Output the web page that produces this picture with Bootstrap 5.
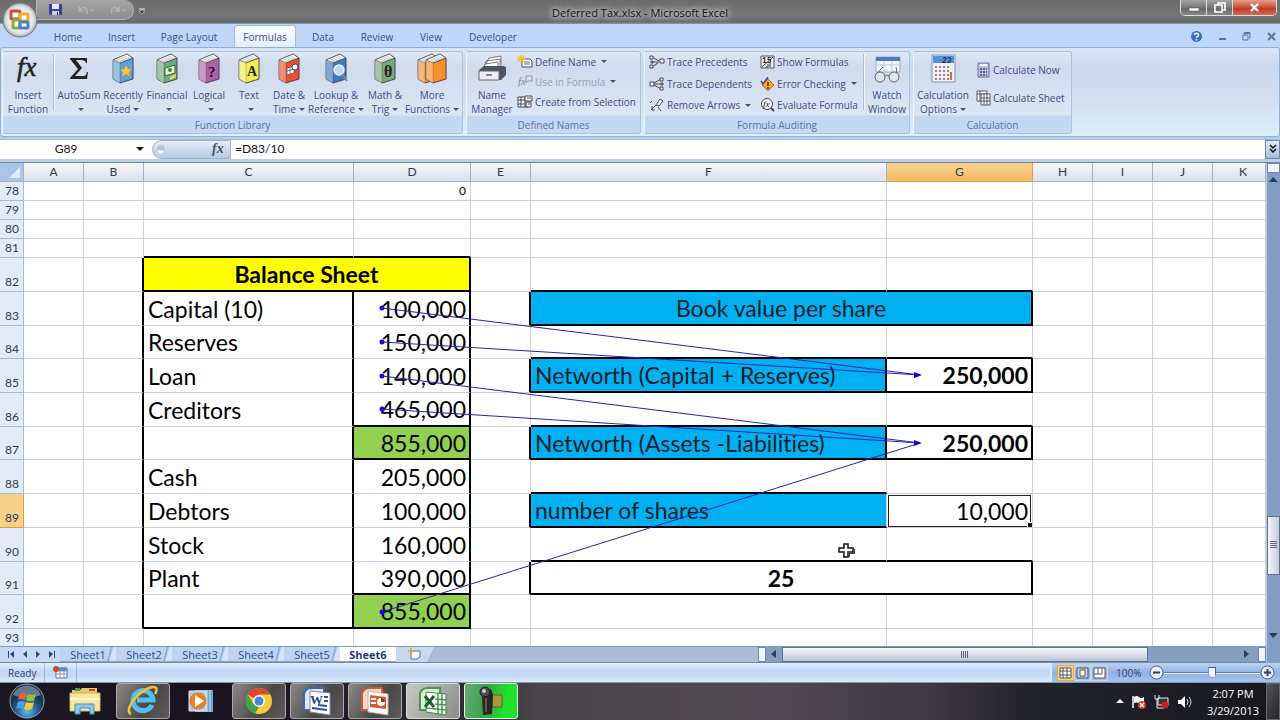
<!DOCTYPE html>
<html lang="en">
<head>
<meta charset="utf-8">
<meta name="viewport" content="width=device-width, initial-scale=1">
<title>Deferred Tax.xlsx - Microsoft Excel</title>
<link rel="stylesheet" href="https://cdn.jsdelivr.net/npm/bootstrap@5.3.0/dist/css/bootstrap.min.css">
<style>
  :root { --ui: "Open Sans", "Noto Sans", sans-serif; --cell: Lato, "Open Sans", sans-serif; --ink: #3b4f86; }
  body { font: 10px/14px var(--ui); color: var(--ink); background: #b9cde9; font-variant-ligatures: none; }
  button, input { font: inherit; color: inherit; border: 0; background: none; padding: 0; }
  a { color: inherit; text-decoration: none; }
  svg { flex: none; display: block; }

  .titlebar { height: 24px; background: linear-gradient(#6b6b6b, #757575 70%, #666 92%, #8fa3b5); color: #111; }
  .title-side { flex: 1 1 0; }
  .quick { height: 20px; width: 98px; margin-left: 36px; background: linear-gradient(#a5a5a5, #8d8d8d); border: 1px solid #b4b4b4; border-top: 0; border-radius: 0 12px 12px 0; }
  .title-text { font-size: 11px; line-height: 18px; text-shadow: 0 0 4px #ccc, 0 0 6px #ccc, 0 0 8px #bbb, 0 0 10px #bbb; }
  .win { height: 16px; border: 1px solid #ddd; border-top: 0; border-radius: 0 0 5px 5px; overflow: hidden; margin-right: 8px; }
  .win button { width: 26px; background: linear-gradient(#a3a3a3, #777 50%, #666 52%, #888); border-right: 1px solid #ddd; }
  .win .shut { width: 43px; border: 0; background: linear-gradient(#e2a090, #cc4a34 50%, #b93823 52%, #d5694e); }
  .win { margin-right: 3px; }
  .orb { position: absolute; left: 2px; top: 2px; z-index: 3; }

  .tabs { height: 23px; background: #bfd7fb; padding-left: 37px; }
  .rtab { height: 22px; line-height: 24px; text-align: center; }
  .rtab.on { background: linear-gradient(#fafcff, #e6eef9); border: 1px solid #9fb8dc; border-bottom: 0; border-radius: 3px 3px 0 0; line-height: 22px; }
  .w-60 { width: 62px; } .w-46 { width: 45px; } .w-90 { width: 90px; } .w-56 { width: 54px; } .w-dev { width: 70px; }

  .ribbon { height: 90px; padding: 3px 0 2px 1px; gap: 3px; background: linear-gradient(#dbe6f5, #cbd8eb 20%, #d3dfee 60%, #dceefc); border: 1px solid #8fb0d5; border-radius: 3px; }
  .rgroup { border: 1px solid #a9c2de; border-left-color: #edf4fb; border-radius: 3px; background: linear-gradient(#dee7f4, #cfdaec 20%, #dbe6f4 78%, #c1d6f0 79%, #c4d9f2); }
  .rgroup .cap { height: 17px; line-height: 19px; text-align: center; color: #5873ab; }
  .big { display: flex; flex-direction: column; align-items: center; white-space: nowrap; width: 44px; }
  .big svg { margin: 1px 0 4px; }
  .big.n40 { width: 40px; } .big.n50 { width: 50px; }
  .sp { margin-left: 2px; }
  .small-btn { display: flex; align-items: center; gap: 2px; white-space: nowrap; }
  .stack { display: flex; flex-direction: column; justify-content: space-around; }
  .vr-line { width: 1px; background: #a9bdd9; border-right: 1px solid #f3f7fc; box-sizing: content-box; margin: 2px 0 6px; }
  .dn::after { content: ""; display: inline-block; border: 3px solid transparent; border-top-color: #44546f; border-bottom: 0; margin-left: 3px; vertical-align: 2px; }
  .g-lib { width: 461px; } .g-names { width: 175px; } .g-audit { width: 266px; } .g-calc { width: 159px; }
  .off { color: #97a3b8; }

  .fbar { height: 23px; margin-top: 2px; background: #fff; border-top: 1px solid #a4bcd0; border-bottom: 3px solid #bcd0e6; color: #111; font: 12px/18px var(--cell); }
  .fbar input { min-width: 0; outline: 0; }
  .name-box { width: 132px; text-align: center; }
  .fx { width: 79px; border-radius: 10px 0 0 10px; background: linear-gradient(#e7eef8, #b6c8e2); border: 1px solid #9db3d0; }
  .expand { width: 15px; background: linear-gradient(#dfe8f4, #a9bbd8); border: 1px solid #6f86a8; }

  .work { min-height: 0; border-top: 1px solid #75869e; }
  .pane { min-height: 0; background: #fff; }
  .grid-tb { table-layout: fixed; border-collapse: separate; border-spacing: 0; width: 100%; font-family: var(--cell); font-size: 23px; line-height: 28px; color: #000; }
  .grid-tb td, .grid-tb th { border: 0 solid #ccd0da; border-width: 0 1px 1px 0; padding: 1px 4px 0; overflow: hidden; white-space: nowrap; vertical-align: middle; font-weight: 400; }
  .grid-tb thead th { font-size: 12px; line-height: 14px; height: 19px; text-align: center; color: #2e3b52; background: linear-gradient(#f4f6fa, #dde1ea); border-color: #9fb3d0; }
  .grid-tb thead th.hot { background: linear-gradient(#f8d493, #f1bb5f); border-color: #e09d3c; }
  .grid-tb tbody th { font-size: 12px; line-height: 14px; text-align: right; vertical-align: bottom; color: #2e3b52; background: #e4ebf6; border-color: #a5bad6; padding: 0 4px 2px 0; }
  .grid-tb tbody th.hot { background: #f9d088; border-color: #e09d3c; }
  .grid-tb .s td, .grid-tb .s th { height: 19px; font-size: 12px; line-height: 14px; padding-top: 0; }
  .grid-tb .t td, .grid-tb .t th { height: 34px; }
  .grid-tb .u td, .grid-tb .u th { height: 33px; }
  .grid-tb .br { border-right: 2px solid #000; }
  .grid-tb .bb { border-bottom: 2px solid #000; }
  .grid-tb .num { text-align: right; }
  .grid-tb .num.br { padding-right: 3px; }
  .grid-tb .total { background: #92d050; }
  .grid-tb .sky { background: #00b0f0; color: #10202c; }
  .grid-tb .yel { background: #ff0; }
  .c-h { width: 24px; } .c-n { width: 60px; } .c-c { width: 210px; } .c-d { width: 117px; } .c-f { width: 356px; } .c-g { width: 146px; }
  .pick { position: absolute; inset: 1px 1px 0 1px; border: 1px solid #222; }
  .handle { position: absolute; right: -1px; bottom: -1px; width: 4px; height: 4px; background: #111; border: 1px solid #fff; box-sizing: content-box; }
  .trace { position: absolute; left: 0; top: 0; pointer-events: none; }

  .sheets { height: 17px; background: #a9bbd8; border-top: 1px solid #7d99c2; border-bottom: 1px solid #7089ae; font-size: 11px; line-height: 15px; color: #2f4f88; }
  .sheets a { width: 56px; text-align: center; background: linear-gradient(105deg, #bdd3f2 85%, #7f9fca 86%, #d4e3f7 90%); border-bottom: 1px solid #8aa3c8; }
  .sheets a.cur { background: #fff; font-weight: 700; color: #1f3c74; }
  .nav-arrows { width: 60px; background: #c6d9f3; }
  .new-sheet { width: 40px; background: linear-gradient(115deg, #c6d9f3 80%, #a9bbd8 82%); padding-left: 12px; }
  .track-h { width: 500px; background: #869fc0; }
  .thumb-h { width: 366px; background: linear-gradient(#fafbfd, #b9c3d1); border: 1px solid #5d7190; }
  .split { width: 8px; background: #eef5fc; border: 1px solid #6d88ad; }
  .vbar { width: 14px; background: #839dc4; border-left: 1px solid #b6cae5; }
  .gap-above { flex: 86 1 0; }
  .gap-below { flex: 15 1 0; }
  .thumb-v { height: 59px; background: linear-gradient(90deg, #f4f6fa, #c3cbd8); border: 1px solid #5d7190; }

  .status { height: 20px; background: linear-gradient(#e3eefc, #c3d8f6 40%, #c0d6f5 60%, #dceafb); color: #2e3f68; border-bottom: 1px solid #8697ad; }
  .status .zone { width: 230px; background: linear-gradient(#bfd4f2, #8fb2e2 50%, #a4c3ee); padding-left: 5px; border-left: 2px solid #dbe8f9; }
  .view { width: 17px; height: 16px; border: 1px solid #c9d8ee; }
  .view.on { background: #fbd476; border-color: #e9a63c; }
  .zoom { width: 96px; height: 16px; appearance: none; background: linear-gradient(#0000 7px, #5d7cac 7px, #5d7cac 8px, #e8f1fd 8px, #e8f1fd 9px, #0000 9px); }
  .zoom::-webkit-slider-thumb { appearance: none; width: 8px; height: 11px; background: #eef4fc; border: 1px solid #46658f; clip-path: polygon(0 0, 100% 0, 100% 65%, 50% 100%, 0 65%); }

  .task { height: 37px; color: #fff; gap: 4px; background: linear-gradient(90deg, #1b1822, #191320 16%, #2b2530 35%, #4a4649 42%, #514a52 60%, #3f3945 72%, #24242c 80%, #17181e); }
  .tbtn { width: 54px; height: 36px; border-radius: 3px; display: flex; align-items: center; justify-content: center; }
  .tbtn.run { border: 1px solid #aaa; background: linear-gradient(120deg, #8b8888, #4a4747 60%, #5e5b5b); }
  .tbtn.front { border: 1px solid #ddd; background: linear-gradient(120deg, #c5c8c5, #8c8e8c); }
  .tbtn.rec { border: 1px solid #dfd; background: linear-gradient(100deg, #6aa877, #35a548 40%, #1fe02c 75%); }
  .clock { font-size: 11px; line-height: 17px; text-align: center; width: 58px; }
  .peek { width: 14px; border: 1px solid #666; background: linear-gradient(120deg, #55555c, #222228); }
</style>
</head>
<body>
<svg width="0" height="0" class="position-absolute" aria-hidden="true">
  <symbol id="book" viewBox="0 0 24 31">
    <path d="M2 7 16 1 22 5V26L9 30 2 26Z" fill="currentColor" stroke="#4a4a5c" stroke-width=".8"/>
    <path d="M2 7 16 1 22 5 9 10Z" fill="#fff" stroke="#555" stroke-width=".8"/>
    <path d="M4 8 16 3M6 9 18 4M8 9 20 5" stroke="#aaa" stroke-width=".6"/>
    <path d="M2 7 9 10V30L2 26Z" fill="#fff" fill-opacity=".35"/>
    <path d="M9 10 22 5V26L9 30Z" fill="none" stroke="#0003"/>
  </symbol>
</svg>
<div class="d-flex flex-column vh-100 overflow-hidden position-relative">
  <button class="orb" aria-label="Office Button">
    <svg width="36" height="36" viewBox="0 0 36 36">
      <defs><radialGradient id="og"><stop offset=".3" stop-color="#fff"/><stop offset=".8" stop-color="#dfe2e8"/><stop offset="1" stop-color="#a8a8ae"/></radialGradient></defs>
      <circle cx="18" cy="18" r="17" fill="url(#og)" stroke="#777"/>
      <g fill="#fff8" stroke-width="3"><rect x="9" y="9" width="9" height="8" rx="1" stroke="#c9542f"/><rect x="18" y="12" width="8" height="7" rx="1" stroke="#efaf2e"/><rect x="11" y="18" width="7" height="8" rx="1" stroke="#7fae3e"/><rect x="18" y="20" width="8" height="6" rx="1" stroke="#4a7fc4"/></g>
    </svg>
  </button>
  <header class="titlebar d-flex align-items-start">
    <div class="title-side d-flex">
      <div class="quick d-flex align-items-center gap-3 ps-2">
        <button aria-label="Save" class="ms-1"><svg width="13" height="13"><path d="M0 1H13V12H1L0 11Z" fill="#3d3f9c"/><path d="M3 1H10V6H3Z" fill="#e9ecf8"/><path d="M3 8H10V12H3Z" fill="#c9cde8"/><path d="M8 9H9V12H8Z" fill="#333"/></svg></button>
        <button aria-label="Undo"><svg width="16" height="12" fill="none" stroke="#b2b2b2" stroke-width="1.5"><path d="M1 2V7H5M1 7C5 1 10 3 9 10M12 5L14 7 16 5"/></svg></button>
        <button aria-label="Redo"><svg width="16" height="12" fill="none" stroke="#b2b2b2" stroke-width="1.5"><path d="M9 2V7H5M9 7C5 1 0 3 2 10M12 5L14 7 16 5"/></svg></button>
      </div>
      <svg width="8" height="8" class="ms-1 mt-2"><path d="M1 1H7" stroke="#eee"/><path d="M1 3H7L4 6Z" fill="#223" stroke="#ddd" stroke-width=".6"/></svg>
    </div>
    <div class="title-text pt-1">Deferred Tax.xlsx - Microsoft Excel</div>
    <div class="title-side d-flex justify-content-end">
      <div class="win d-flex">
        <button aria-label="Minimize"><svg class="m-auto" width="12" height="8"><path d="M1 4H11V7H1Z" fill="#fff" stroke="#444" stroke-width=".5"/></svg></button>
        <button aria-label="Restore"><svg class="m-auto" width="12" height="11" fill="none" stroke="#fff" stroke-width="1.6"><path d="M4 3V1H11V8H9"/><path d="M1 3H8V10H1Z"/></svg></button>
        <button class="shut" aria-label="Close"><svg class="m-auto" width="11" height="9" stroke="#fff" stroke-width="2.4"><path d="M2 1 9 8M9 1 2 8"/></svg></button>
      </div>
    </div>
  </header>
  <nav class="tabs d-flex align-items-end">
    <a href="#" class="rtab w-60">Home</a><a href="#" class="rtab w-46">Insert</a><a href="#" class="rtab w-90">Page Layout</a><a href="#" class="rtab on w-60">Formulas</a><a href="#" class="rtab w-56">Data</a><a href="#" class="rtab w-56">Review</a><a href="#" class="rtab w-56">View</a><a href="#" class="rtab w-dev">Developer</a>
    <div class="ms-auto d-flex align-items-center gap-3 pb-1 pe-1">
      <button aria-label="Help"><svg width="13" height="13" viewBox="0 0 13 13"><circle cx="6.500" cy="6.500" r="6" fill="#3b6fc4" stroke="#cfe0f8"/><path d="M4.500 5C4.500 2.500 8.500 2.500 8.500 5 8.500 6.500 6.500 6.500 6.500 8M6.500 9V10.500" stroke="#fff" stroke-width="1.500" fill="none"/></svg></button>
      <button aria-label="Minimize workbook"><svg width="7" height="9"><path d="M0 7H7" stroke="#62738f" stroke-width="2"/></svg></button>
      <button aria-label="Restore workbook"><svg width="9" height="9" fill="none" stroke="#62738f"><path d="M2 3V1H8V6H7M1 3H6V8H1Z"/><path d="M2 1H8" stroke-width="2"/></svg></button>
      <button aria-label="Close workbook"><svg width="9" height="9" stroke="#62738f" stroke-width="2"><path d="M1 1 8 8M8 1 1 8"/></svg></button>
    </div>
  </nav>

  <section class="ribbon d-flex flex-shrink-0">
    <div class="rgroup g-lib d-flex flex-column">
      <div class="d-flex flex-fill">
        <button class="big n50"><svg width="36" height="31"><text x="7" y="23" font-family="Liberation Serif, serif" font-style="italic" font-size="27" fill="#222" stroke="#222" stroke-width=".5">fx</text></svg>Insert<br>Function</button>
        <div class="vr-line"></div>
        <button class="big sp"><svg width="24" height="31"><path d="M3 5H20V10H19C18 7 17 7 9 7L15 15 8 23H16C19 23 19 22 20 19H21L20 26H3V25L11 16 3 6Z" fill="#222"/></svg>AutoSum<span class="dn"></span></button>
        <button class="big"><svg width="24" height="31" color="#5ba3d6"><use href="#book"/><path d="M15 12 17 16 21 16 18 19 19 24 15 21 11 24 12 19 9 17 13 16Z" fill="#ffc145" stroke="#d18a28" stroke-width=".5"/></svg>Recently<span class="dn">Used</span></button>
        <button class="big"><svg width="24" height="31" color="#6cad7e"><use href="#book"/><path d="M10 15 20 12V20L10 23Z" fill="#e5f2c7" stroke="#33613d"/><circle cx="15" cy="17" r="2" fill="#4a7b43"/><path d="M15 24 21 21V24L15 27Z" fill="#efcd52"/></svg>Financial<span class="dn"></span></button>
        <button class="big n40"><svg width="24" height="31" color="#ad62a8"><use href="#book"/><text x="11" y="24" font-family="Liberation Serif, serif" font-weight="700" font-size="15" fill="#221022">?</text></svg>Logical<span class="dn"></span></button>
        <button class="big n40"><svg width="24" height="31" color="#f3ec4e"><use href="#book"/><text x="10" y="23" font-family="Liberation Serif, serif" font-weight="700" font-size="14" fill="#222">A</text></svg>Text<span class="dn"></span></button>
        <button class="big n40"><svg width="24" height="31" color="#e9502d"><use href="#book"/><path d="M10 15 17 13V20L10 22Z" fill="#fff" stroke="#556" stroke-width=".8"/><path d="M10 18 17 16M13 14V21" stroke="#556" stroke-width=".8"/><circle cx="18" cy="14" r="3" fill="#fff" stroke="#446"/></svg>Date &amp;<span class="dn">Time</span></button>
        <button class="big n50 sp"><svg width="24" height="31" color="#3f78bd"><use href="#book"/><circle cx="15" cy="17" r="5" fill="#b9dcf5" stroke="#eef" stroke-width="1.500"/><path d="M18 21 23 28" stroke="#889" stroke-width="2"/></svg>Lookup &amp;<span class="dn">Reference</span></button>
        <button class="big sp"><svg width="24" height="31" color="#78aa78"><use href="#book"/><text x="11" y="24" font-family="Liberation Serif, serif" font-weight="700" font-size="16" fill="#222">θ</text></svg>Math &amp;<span class="dn">Trig</span></button>
        <button class="big n50"><svg width="32" height="31" color="#f5902b"><use href="#book" width="24" height="31"/><use href="#book" x="8" width="24" height="31"/></svg>More<span class="dn">Functions</span></button>
      </div>
      <div class="cap">Function Library</div>
    </div>
    <div class="rgroup g-names d-flex flex-column">
      <div class="d-flex flex-fill">
        <button class="big n50"><svg width="30" height="31"><path d="M9 11 12 5 24 3V12M7 14 9 8 23 6V15M5 18 8 11 21 9V18" fill="#fff" stroke="#778"/><path d="M2 17 7 13H26L29 14V22L24 27H2Z" fill="#4c5568"/><path d="M2 18H22V27H2Z" fill="#eceef3" stroke="#667"/><path d="M9 21H15V23H9Z" fill="#889"/></svg>Name<br>Manager</button>
        <div class="stack pb-1">
          <button class="small-btn dn"><svg width="16" height="14"><path d="M5 4H13L15 6V12H5Z" fill="#fff" stroke="#446"/><path d="M7 7H13M7 9H13" stroke="#668"/><path d="M4 0V9M0 4H9M1 1 7 7M7 1 1 7" stroke="#efc439" stroke-width="1.300"/></svg>Define Name</button>
          <button class="small-btn dn off" disabled><svg width="16" height="14"><text x="1" y="10" font-family="Liberation Serif, serif" font-style="italic" font-size="11" fill="#808a9c">fx</text><path d="M9 1H15V6H11L9 8Z" fill="#dde3ee" stroke="#8b95a8"/></svg>Use in Formula</button>
          <button class="small-btn"><svg width="16" height="14" fill="#fff" stroke="#445"><path d="M1 2H11V12H1ZM1 5H11M1 9H11M4 2V12M8 2V12"/><path d="M8 1H15V6H8ZM9 7H14V12H9Z"/><path d="M10 3H14M11 9H13"/></svg>Create from Selection</button>
        </div>
      </div>
      <div class="cap">Defined Names</div>
    </div>
    <div class="rgroup g-audit d-flex flex-column">
      <div class="d-flex flex-fill">
        <div class="stack ps-1">
          <button class="small-btn"><svg width="16" height="14" fill="#fff" stroke="#445"><path d="M3 2L10 6M3 7H10M3 12 9 8"/><path d="M1 1H4V4H1ZM11 4H15V8H11ZM1 10H4V13H1Z"/><path d="M1 7H5M3 5V9"/></svg>Trace Precedents</button>
          <button class="small-btn"><svg width="16" height="14" fill="#fff" stroke="#445"><path d="M5 6 12 2M5 7H13M5 8 12 12"/><path d="M1 5H5V9H1ZM11 1H14V4H11ZM11 10H14V13H11Z"/><path d="M11 7H15M13 5V9"/></svg>Trace Dependents</button>
          <button class="small-btn dn"><svg width="16" height="14" fill="none" stroke="#445"><path d="M2 12 7 7M12 13 9 9M3 8V12H6M1 5 3 3"/><path d="M7 7 11 1 14 3 10 8Z" fill="#eef"/></svg>Remove Arrows</button>
        </div>
        <div class="stack ps-2">
          <button class="small-btn"><svg width="15" height="14"><path d="M1 1H14V13H1Z" fill="#e8ebf0" stroke="#556"/><text x="2" y="8" font-size="8" font-weight="700" font-family="Lato, sans-serif" fill="#111">15</text><path d="M2 12 13 2M6 12H8V9M10 12V7" stroke="#334" fill="none"/></svg>Show Formulas</button>
          <button class="small-btn dn"><svg width="15" height="14"><path d="M8 2 14 8 8 14 2 8Z" fill="#f5ac25" stroke="#b36b18"/><path d="M8 5V9M8 10V12" stroke="#611" stroke-width="1.500"/><path d="M1 4 3 7 8 0" stroke="#3a4a98" stroke-width="1.500" fill="none"/></svg>Error Checking</button>
          <button class="small-btn"><svg width="15" height="14"><circle cx="7" cy="6" r="5.500" fill="#f4f6fa" stroke="#445"/><path d="M11 10 14 13" stroke="#445" stroke-width="2"/><text x="3" y="9" font-size="9" font-style="italic" font-family="Liberation Serif, serif" fill="#111">fx</text></svg>Evaluate Formula</button>
        </div>
        <div class="vr-line ms-auto"></div>
        <button class="big"><svg width="30" height="31"><path d="M4 4H28V19H4Z" fill="#f4f7fc" stroke="#9ab"/><path d="M4 4H28V8H4Z" fill="#4c78c8"/><path d="M4 12H28M12 8V19M20 8V19" stroke="#b9c8dd"/><circle cx="8" cy="24" r="5" fill="#dfe7f2cc" stroke="#666"/><circle cx="22" cy="24" r="5" fill="#dfe7f2cc" stroke="#666"/><path d="M13 23Q15 21 17 23M4 21 11 14M25 20 24 14" stroke="#666" fill="none"/></svg>Watch<br>Window</button>
      </div>
      <div class="cap">Formula Auditing</div>
    </div>
    <div class="rgroup g-calc d-flex flex-column">
      <div class="d-flex flex-fill">
        <button class="big n50 ms-1 me-2"><svg width="26" height="31"><path d="M2 2H25V29H2Z" fill="#eef0f3" stroke="#8394ad"/><path d="M3 3H24V10H3Z" fill="#5593dc"/><text x="12" y="10" font-size="8" font-style="italic" font-weight="700" font-family="Lato, sans-serif" fill="#124">23</text><path d="M5 14H21M5 18H21M5 22H21M5 26H21" stroke="#a2807e" stroke-width="2" stroke-dasharray="2 2"/><path d="M21 19V27" stroke="#e0653c" stroke-width="2"/></svg>Calculation<span class="dn">Options</span></button>
        <div class="stack py-1">
          <button class="small-btn"><svg width="15" height="16"><path d="M2 1H13V15H2Z" fill="#bcc3e4" stroke="#6b719c"/><path d="M4 3H11" stroke="#fff" stroke-width="2"/><path d="M4 7H11M4 10H11M4 13H11" stroke="#5b5f94" stroke-width="2" stroke-dasharray="2 1"/></svg>Calculate Now</button>
          <button class="small-btn"><svg width="15" height="16" fill="#fff" stroke="#556"><path d="M1 1H11V11H1ZM1 4H11M4 1V11"/><path d="M5 4H14V15H5ZM5 8H14M5 11H14M8 4V15M11 4V15"/></svg>Calculate Sheet</button>
        </div>
      </div>
      <div class="cap">Calculation</div>
    </div>
  </section>

  <div class="fbar d-flex flex-shrink-0">
    <input class="name-box" aria-label="Name box" value="G89">
    <button class="px-1" aria-label="Name list"><svg width="8" height="5"><path d="M0 0H8L4 4Z" fill="#111"/></svg></button>
    <div class="fx d-flex align-items-center justify-content-between ms-1 ps-1 pe-1"><svg width="9" height="9"><circle cx="4" cy="4" r="4" fill="#b4c3d8"/><path d="M1 5A3 3 0 0 0 7 6" fill="#fff"/></svg><button aria-label="Insert function"><svg width="16" height="16"><text x="2" y="12" font-size="14" font-style="italic" font-weight="700" font-family="Liberation Serif, serif" fill="#45536b">fx</text></svg></button></div>
    <input class="flex-fill ps-1" aria-label="Formula bar" value="=D83/10">
    <button class="expand" aria-label="Expand formula bar"><svg class="m-auto" width="8" height="10" fill="none" stroke="#111" stroke-width="1.500"><path d="M1 1 4 4 7 1M1 5 4 8 7 5"/></svg></button>
  </div>

  <main class="work d-flex flex-fill">
    <div class="d-flex flex-column flex-fill overflow-hidden">
      <div class="pane flex-fill overflow-hidden position-relative">
        <table class="grid-tb">
          <colgroup><col class="c-h"><col class="c-n"><col class="c-n"><col class="c-c"><col class="c-d"><col class="c-n"><col class="c-f"><col class="c-g"><col class="c-n"><col class="c-n"><col class="c-n"><col></colgroup>
          <thead><tr><th class="p-0"><svg class="ms-auto" width="23" height="18"><path d="M0 0H23V18H0Z" fill="#a9c4e9"/><path d="M20 4V15H9Z" fill="#dfeafa"/></svg></th><th>A</th><th>B</th><th>C</th><th>D</th><th>E</th><th>F</th><th class="hot">G</th><th>H</th><th>I</th><th>J</th><th class="ps-2 pe-0">K</th></tr></thead>
          <tbody>
            <tr class="s"><th>78</th><td></td><td></td><td></td><td class="num pe-1">0</td><td></td><td></td><td></td><td></td><td></td><td></td><td></td></tr>
            <tr class="s"><th>79</th><td></td><td></td><td></td><td></td><td></td><td></td><td></td><td></td><td></td><td></td><td></td></tr>
            <tr class="s"><th>80</th><td></td><td></td><td></td><td></td><td></td><td></td><td></td><td></td><td></td><td></td><td></td></tr>
            <tr class="s"><th>81</th><td></td><td></td><td class="bb"></td><td class="bb"></td><td></td><td></td><td></td><td></td><td></td><td></td><td></td></tr>
            <tr class="t"><th>82</th><td></td><td class="br"></td><td class="yel br bb text-center fw-bold" colspan="2">Balance Sheet</td><td></td><td class="bb"></td><td class="bb"></td><td></td><td></td><td></td><td></td></tr>
            <tr class="t"><th>83</th><td></td><td class="br"></td><td class="br">Capital (10)</td><td class="num br">100,000</td><td class="br"></td><td class="sky br bb text-center" colspan="2">Book value per share</td><td></td><td></td><td></td><td></td></tr>
            <tr class="u"><th>84</th><td></td><td class="br"></td><td class="br">Reserves</td><td class="num br">150,000</td><td></td><td class="bb"></td><td class="bb"></td><td></td><td></td><td></td><td></td></tr>
            <tr class="t"><th>85</th><td></td><td class="br"></td><td class="br">Loan</td><td class="num br">140,000</td><td class="br"></td><td class="sky br bb">Networth (Capital + Reserves)</td><td class="num br bb fw-bold">250,000</td><td></td><td></td><td></td><td></td></tr>
            <tr class="t"><th>86</th><td></td><td class="br"></td><td class="br">Creditors</td><td class="num br bb">465,000</td><td></td><td class="bb"></td><td class="bb"></td><td></td><td></td><td></td><td></td></tr>
            <tr class="u"><th>87</th><td></td><td class="br"></td><td class="br"></td><td class="num br bb total">855,000</td><td class="br"></td><td class="sky br bb">Networth (Assets -Liabilities)</td><td class="num br bb fw-bold">250,000</td><td></td><td></td><td></td><td></td></tr>
            <tr class="t"><th>88</th><td></td><td class="br"></td><td class="br">Cash</td><td class="num br">205,000</td><td></td><td class="bb"></td><td></td><td></td><td></td><td></td><td></td></tr>
            <tr class="t"><th class="hot">89</th><td></td><td class="br"></td><td class="br">Debtors</td><td class="num br">100,000</td><td class="br"></td><td class="sky bb">number of shares</td><td class="num position-relative">10,000<span class="pick"></span><span class="handle"></span></td><td></td><td></td><td></td><td></td></tr>
            <tr class="t"><th>90</th><td></td><td class="br"></td><td class="br">Stock</td><td class="num br">160,000</td><td></td><td class="bb"></td><td class="bb"></td><td></td><td></td><td></td><td></td></tr>
            <tr class="u"><th>91</th><td></td><td class="br"></td><td class="br">Plant</td><td class="num br bb">390,000</td><td class="br"></td><td class="br bb text-center fw-bold" colspan="2">25</td><td></td><td></td><td></td><td></td></tr>
            <tr class="t"><th>92</th><td></td><td class="br"></td><td class="br bb"></td><td class="num br bb total">855,000</td><td></td><td></td><td></td><td></td><td></td><td></td><td></td></tr>
            <tr class="s"><th>93</th><td></td><td></td><td></td><td></td><td></td><td></td><td></td><td></td><td></td><td></td><td></td></tr>
          </tbody>
        </table>
        <svg class="trace" width="1040" height="480" viewBox="0 163 1040 480">
          <g stroke="#2a22b4" fill="none"><path d="M382 308 920 375M382 342 920 375M382 376 920 443M382 409 920 443M382 612 920 443"/></g>
          <g fill="#1408e0"><circle cx="382" cy="308" r="2.500"/><circle cx="382" cy="342" r="2.500"/><circle cx="382" cy="376" r="2.500"/><circle cx="382" cy="409" r="2.500"/><circle cx="382" cy="612" r="2.500"/><path d="M914 372 922 375 914 378ZM914 440 922 443 914 446Z"/></g>
          <path d="M844 544H848V548H853V552H848V557H844V552H839V548H844Z" fill="#fff" stroke="#111" stroke-width="1.500"/><path d="M849 557V553H854V549" fill="none" stroke="#444" stroke-width="2"/>
        </svg>
      </div>
      <div class="sheets d-flex flex-shrink-0">
        <div class="nav-arrows d-flex align-items-center justify-content-around ps-1">
          <button aria-label="First sheet"><svg width="7" height="7"><path d="M0 0H1V7H0ZM6 0V7L2 3Z" fill="#234a86"/></svg></button><button aria-label="Previous sheet"><svg width="5" height="7"><path d="M4 0V7L0 3Z" fill="#234a86"/></svg></button><button aria-label="Next sheet"><svg width="5" height="7"><path d="M0 0V7L4 3Z" fill="#234a86"/></svg></button><button aria-label="Last sheet"><svg width="7" height="7"><path d="M5 0H6V7H5ZM0 0V7L4 3Z" fill="#234a86"/></svg></button>
        </div>
        <a href="#">Sheet1</a><a href="#">Sheet2</a><a href="#">Sheet3</a><a href="#">Sheet4</a><a href="#">Sheet5</a><a href="#" class="cur">Sheet6</a>
        <button class="new-sheet" aria-label="Insert worksheet"><svg width="14" height="13"><path d="M3 3H12V9L9 11H3Z" fill="#f5f8fd" stroke="#5d6f8f"/><path d="M3 0V7M0 3H7" stroke="#e09d3c" stroke-width="1.500"/></svg></button>
        <div class="flex-fill"></div>
        <div class="split"></div>
        <div class="track-h d-flex align-items-center">
          <button class="px-1" aria-label="Scroll left"><svg width="8" height="9"><path d="M6 0V8L1 4Z" fill="#263c60"/></svg></button>
          <div class="thumb-h h-100 d-flex align-items-center justify-content-center"><svg width="8" height="7" stroke="#667"><path d="M.5 0V7M2.500 0V7M4.500 0V7M6.500 0V7"/></svg></div>
          <button class="ms-auto px-2" aria-label="Scroll right"><svg width="6" height="9"><path d="M0 0V8L5 4Z" fill="#263c60"/></svg></button>
          <div class="split h-100"></div>
        </div>
      </div>
    </div>
    <div class="vbar d-flex flex-column align-items-stretch flex-shrink-0">
      <div class="split w-100 pt-1 pb-1"></div>
      <button class="pt-1" aria-label="Scroll up"><svg class="m-auto" width="9" height="6"><path d="M0 5H9L4 0Z" fill="#263c60"/></svg></button>
      <div class="gap-above"></div>
      <div class="thumb-v flex-shrink-0 d-flex align-items-center justify-content-center"><svg width="7" height="8" stroke="#667"><path d="M0 .5H7M0 2.500H7M0 4.500H7M0 6.500H7"/></svg></div>
      <div class="gap-below"></div>
      <button class="pb-4" aria-label="Scroll down"><svg class="m-auto" width="9" height="6"><path d="M0 0H9L4 5Z" fill="#263c60"/></svg></button>
    </div>
  </main>

  <footer class="status d-flex align-items-center flex-shrink-0">
    <span class="ps-2 pe-2">Ready</span>
    <span class="vr"></span>
    <button class="px-2" aria-label="Record macro"><svg width="15" height="13"><path d="M3 2H14V12H3Z" fill="#fff" stroke="#5b7099"/><path d="M3 2H14V5H3ZM3 8H14M7 5V12M11 5V12" fill="#5f86c4" stroke="#7f93b8"/><circle cx="3" cy="3" r="3" fill="#d04a3a"/></svg></button>
    <span class="vr"></span>
    <div class="zone ms-auto h-100 d-flex align-items-center">
      <button class="view on" aria-label="Normal view"><svg width="15" height="14" fill="#fff" stroke="#555"><path d="M2 2H13V12H2ZM2 5H13M2 9H13M5 2V12M9 2V12"/></svg></button>
      <button class="view" aria-label="Page layout view"><svg width="15" height="14" fill="#c9cfd8" stroke="#555"><path d="M2 2H13V12H2Z"/><path d="M5 4H10V10H5Z" fill="#fff"/></svg></button>
      <button class="view" aria-label="Page break preview"><svg width="15" height="14" fill="#fff" stroke="#555"><path d="M2 2H13V12H2Z"/><path d="M2 8H6V2M6 8H10V2" /></svg></button>
      <label for="zoom" class="ps-2 pe-2">100%</label>
      <button aria-label="Zoom out"><svg width="15" height="15"><circle cx="7.500" cy="7.500" r="6.500" fill="#e8f0fb" stroke="#4b628a"/><path d="M4 7.500H11" stroke="#2c3f66" stroke-width="2"/></svg></button>
      <input id="zoom" class="zoom" type="range" min="0" max="100" value="50">
      <button aria-label="Zoom in"><svg width="15" height="15"><circle cx="7.500" cy="7.500" r="6.500" fill="#e8f0fb" stroke="#4b628a"/><path d="M4 7.500H11M7.500 4V11" stroke="#2c3f66" stroke-width="2"/></svg></button>
    </div>
  </footer>

  <div class="task d-flex flex-shrink-0">
    <button class="tbtn" aria-label="Start"><svg width="37" height="36" viewBox="0 0 37 36"><defs><radialGradient id="sg" cy=".8"><stop offset="0" stop-color="#56c0ec"/><stop offset=".6" stop-color="#28629c"/><stop offset="1" stop-color="#1b3550"/></radialGradient></defs><circle cx="18" cy="18" r="17" fill="url(#sg)" stroke="#8da5b8"/><path d="M4 12A15 15 0 0 1 32 12Q18 18 4 12Z" fill="#fff5"/><path d="M11 11Q14 9 18 11L16 17Q13 15 9 17Z" fill="#ee6230"/><path d="M19 11Q23 13 27 11L25 18Q21 19 17 17Z" fill="#8ac43c"/><path d="M9 19Q12 17 16 19L14 26Q11 24 7 26Z" fill="#49a1e8"/><path d="M17 19Q21 21 25 19L23 26Q19 28 15 26Z" fill="#fbc82f"/></svg></button>
    <button class="tbtn" aria-label="Explorer"><svg width="34" height="30" viewBox="0 0 34 30"><path d="M4 4H12L14 2H29V24H4Z" fill="#e7c96a"/><path d="M7 2H12V5H7Z" fill="#48a04f"/><path d="M21 3H27V5H21Z" fill="#c8493a"/><path d="M2 7H32V25H2Z" fill="#f8e7a2" stroke="#d7b457"/><path d="M2 13H32" stroke="#fff6cf" stroke-width="2"/><path d="M7 18H26V28H22V22H12V28H7Z" fill="#8cc8e8" stroke="#4a93bd"/></svg></button>
    <button class="tbtn run" aria-label="Internet Explorer"><svg width="32" height="32" viewBox="0 0 32 32"><path d="M25 20A10 10 0 1 1 26 15H10" fill="none" stroke="#55bdf0" stroke-width="5"/><path d="M4 29C-3 26 8 9 22 3 30 0 31 4 28 9" fill="none" stroke="#f1c232" stroke-width="2.500"/></svg></button>
    <button class="tbtn" aria-label="Media Player"><svg width="28" height="26" viewBox="0 0 28 26"><path d="M8 2H26V24H8Z" fill="#6aa3cf"/><path d="M20 2V24M23 2V24" stroke="#d5e7f5"/><path d="M2 3H19V23H2Z" fill="#a8cbe6" stroke="#dfeaf4"/><circle cx="11" cy="13" r="8.500" fill="#ee7c22"/><path d="M8 7 17 13 8 19Z" fill="#fff"/></svg></button>
    <button class="tbtn run" aria-label="Chrome"><svg width="28" height="28" viewBox="0 0 28 28"><circle cx="14" cy="14" r="13" fill="#f6cb38"/><path d="M14 14 2.700 7.500A13 13 0 0 1 25.300 7.500H14Z" fill="#dc4434"/><path d="M2.700 7.500 8.500 17 14 20 10 26.500A13 13 0 0 1 2.700 7.500Z" fill="#42a24a"/><circle cx="14" cy="14" r="6" fill="#fff"/><circle cx="14" cy="14" r="4.500" fill="#4a86d8"/></svg></button>
    <button class="tbtn run" aria-label="Word"><svg width="30" height="30" viewBox="0 0 30 30"><path d="M2 24V8Q3 2 10 2H22V24Z" fill="#dbe6f6" stroke="#3c65ab" stroke-width="2"/><path d="M8 5 28 7V29L8 26Z" fill="#fff" stroke="#88a"/><path d="M16 19 25 20M10 22 25 24M22 11H26M22 15H26" stroke="#2d5194" stroke-width="2"/><text x="8" y="18" font-size="13" font-weight="700" font-family="Liberation Serif, serif" fill="#244486">W</text></svg></button>
    <button class="tbtn run" aria-label="PowerPoint"><svg width="30" height="30" viewBox="0 0 30 30"><path d="M2 24V8Q3 2 10 2H22V24Z" fill="#f6d9c8" stroke="#d05a32" stroke-width="2"/><path d="M8 5 28 8V29L8 26Z" fill="#fff" stroke="#caa"/><path d="M10 9 26 11V23L10 21Z" fill="#d95830"/><circle cx="21" cy="16" r="4" fill="#fff"/><path d="M21 16V12A4 4 0 0 1 25 16Z" fill="#a32f13"/><path d="M11 13H16M11 17H16" stroke="#fff" stroke-width="2"/></svg></button>
    <button class="tbtn front" aria-label="Excel"><svg width="30" height="30" viewBox="0 0 30 30"><path d="M2 24V8Q3 2 10 2H22V24Z" fill="#d8ebd6" stroke="#4a9550" stroke-width="2"/><path d="M8 6 28 8V29L8 26Z" fill="#fff" stroke="#3f8545"/><path d="M20 7V28M24 8V28M17 13 28 14M17 18 28 19M8 22 28 24" stroke="#4a9550" stroke-width="1.500"/><path d="M7 10 16 21M16 10 7 21" stroke="#24602c" stroke-width="3"/></svg></button>
    <button class="tbtn rec" aria-label="Recorder"><svg width="28" height="32" viewBox="0 0 28 32"><path d="M15 10H25V22H15Z" fill="#a49b38" stroke="#665f20"/><path d="M5 9 14 4 16 10 15 29 6 30Z" fill="#2d2523"/><path d="M9 13V27" stroke="#675650" stroke-width="2"/><circle cx="8" cy="7" r="5" fill="#4c4a4a" stroke="#1d1d1d"/><circle cx="7" cy="6" r="2" fill="#ccc"/></svg></button>
    <div class="ms-auto d-flex align-items-center">
      <svg width="8" height="5"><path d="M0 4H8L4 0Z" fill="#fff"/></svg>
      <svg class="ms-2" width="14" height="14"><path d="M1 1V13" stroke="#fff" stroke-width="1.500"/><path d="M2 2Q5 0 7 2T12 2V8Q9 9 7 8T2 8Z" fill="#f4f4f4"/><circle cx="10" cy="10" r="4" fill="#d33a2c"/><path d="M8 8 12 12M12 8 8 12" stroke="#fff" stroke-width="1.300"/></svg>
      <svg class="ms-2" width="15" height="14"><path d="M4 3H14V10H4Z" fill="#333" stroke="#eee"/><path d="M1 0V4H5V0M3 4V13H10" stroke="#eee" fill="none"/><circle cx="11" cy="10" r="3.500" fill="#c8202a"/></svg>
      <svg class="ms-2 me-1" width="15" height="14"><path d="M1 5H4L8 1V13L4 9H1Z" fill="#fff"/><path d="M10 4Q12 7 10 10M12 2Q16 7 12 12" fill="none" stroke="#ddd"/></svg>
      <div class="clock ms-2 me-1">2:07 PM<br>3/29/2013</div>
      <button class="peek h-100" aria-label="Show desktop"></button>
    </div>
  </div>
</div>
<script src="https://cdn.jsdelivr.net/npm/bootstrap@5.3.0/dist/js/bootstrap.bundle.min.js"></script>
</body>
</html>
